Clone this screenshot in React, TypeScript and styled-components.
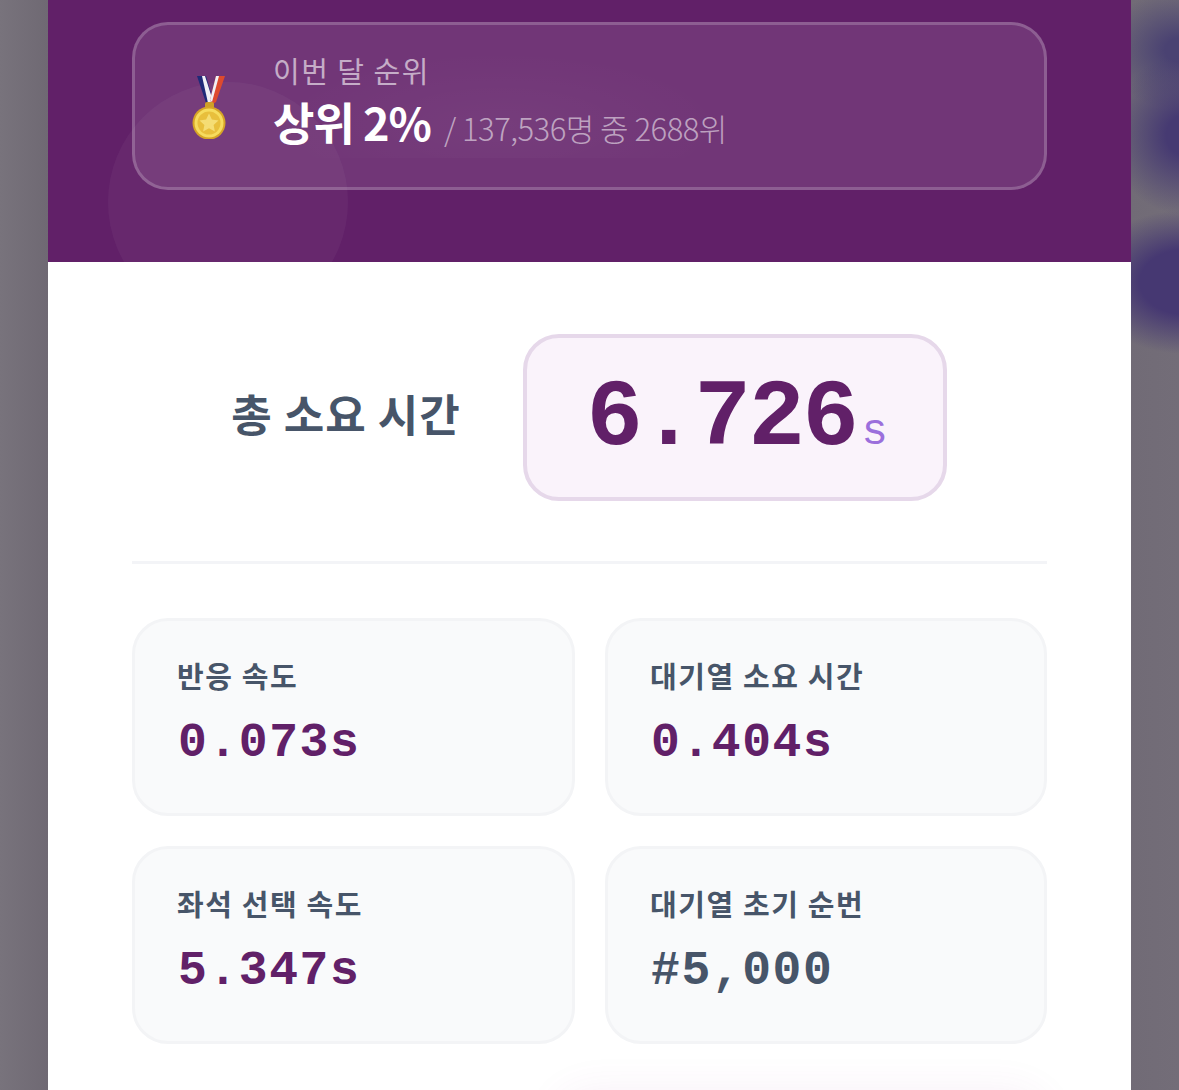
import styled, { createGlobalStyle } from "styled-components";

const GlobalStyle = createGlobalStyle`
  html, body {
    margin: 0;
    padding: 0;
    height: 100%;
    overflow: hidden;
  }
  body {
    font-family: "Noto Sans CJK KR", "Noto Sans", sans-serif;
  }
`;

const Backdrop = styled.div`
  height: 1090px;
  padding: 0 48px;
  overflow: hidden;
  background:
    radial-gradient(ellipse 100px 72px at 1185px 282px, #463872 45%, rgba(70, 56, 114, 0) 100%),
    radial-gradient(ellipse 75px 80px at 1185px 135px, #463a72 25%, rgba(70, 58, 114, 0) 100%),
    radial-gradient(ellipse 75px 60px at 1180px 50px, #4a4272 20%, rgba(74, 66, 114, 0) 100%),
    linear-gradient(90deg, #78737c 0, #6f6973 48px, #716b76 1131px, #736d78 100%);
`;

const Modal = styled.main`
  height: 100%;
  background: #ffffff;
`;

const Header = styled.header`
  position: relative;
  height: 262px;
  padding: 22px 84px 0;
  box-sizing: border-box;
  overflow: hidden;
  background: #612068;
`;

const Bubble = styled.div`
  position: absolute;
  left: 60px;
  top: 82px;
  width: 240px;
  height: 240px;
  border-radius: 50%;
  background: rgba(255, 255, 255, 0.04);
`;

const RankCard = styled.section`
  position: relative;
  display: flex;
  align-items: center;
  gap: 46px;
  height: 168px;
  padding: 0 0 0 56px;
  box-sizing: border-box;
  border: 3px solid rgba(255, 255, 255, 0.2);
  border-radius: 36px;
  background: rgba(255, 255, 255, 0.1);
`;

const Medal = styled.svg`
  flex: none;
  width: 36px;
  height: 66px;
`;

const RankText = styled.div`
  display: flex;
  flex-direction: column;
  margin-top: -4px;
  background: radial-gradient(ellipse at 50% 70%, rgba(255, 255, 255, 0.035), rgba(255, 255, 255, 0) 70%);
`;

const RankLabel = styled.div`
  font-size: 29px;
  line-height: 40px;
  letter-spacing: 1.5px;
  color: rgba(255, 255, 255, 0.6);
`;

const RankLine = styled.div`
  display: flex;
  align-items: baseline;
  gap: 13px;
  margin-top: 2px;
  line-height: 60px;
`;

const RankValue = styled.span`
  font-size: 45px;
  font-weight: 700;
  letter-spacing: -1px;
  color: #ffffff;
`;

const RankDetail = styled.span`
  font-size: 31px;
  font-weight: 300;
  letter-spacing: -0.5px;
  color: rgba(255, 255, 255, 0.55);
`;

const Content = styled.div`
  padding: 72px 84px 0;
`;

const TotalRow = styled.section`
  display: flex;
  align-items: center;
  justify-content: center;
  gap: 62px;
  padding-right: 1px;
`;

const TotalLabel = styled.div`
  padding-bottom: 10px;
  font-size: 44px;
  font-weight: 700;
  letter-spacing: 1px;
  color: #475569;
`;

const TotalBox = styled.div`
  display: flex;
  align-items: baseline;
  justify-content: center;
  width: 424px;
  height: 167px;
  box-sizing: border-box;
  padding: 26px 0 0 5px;
  border: 4px solid #e6d8ea;
  border-radius: 36px;
  background: #faf3fb;
`;

const TotalValue = styled.span`
  font-family: "Liberation Mono", monospace;
  font-size: 94px;
  line-height: 110px;
  font-weight: 700;
  letter-spacing: -2.4px;
  color: #612068;
`;

const TotalUnit = styled.span`
  margin-left: 5px;
  font-family: "Liberation Mono", monospace;
  font-size: 44px;
  color: #9b6fdc;
`;

const Divider = styled.hr`
  height: 3px;
  margin: 60px 0 54px;
  border: 0;
  background: #f3f4f7;
`;

const StatGrid = styled.section`
  display: grid;
  grid-template-columns: 443px 442px;
  grid-auto-rows: 198px;
  gap: 30px;
`;

const StatCard = styled.div`
  display: flex;
  flex-direction: column;
  gap: 20px;
  padding: 34px 42px 0;
  box-sizing: border-box;
  border: 3px solid #f3f4f6;
  border-radius: 36px;
  background: #f9fafb;
`;

const StatLabel = styled.div`
  font-size: 29px;
  line-height: 40px;
  font-weight: 700;
  letter-spacing: 1.6px;
  color: #475569;
`;

const StatValue = styled.div<{ $muted?: boolean }>`
  padding-left: 1px;
  font-family: "Liberation Mono", monospace;
  font-size: 48px;
  line-height: 56px;
  font-weight: 700;
  letter-spacing: 1.6px;
  color: ${(p) => (p.$muted ? "#475569" : "#612068")};
`;

const Actions = styled.div`
  display: grid;
  grid-template-columns: 443px 442px;
  gap: 30px;
  margin-top: 48px;
`;

const ShareGlow = styled.div`
  grid-column: 2;
  height: 100px;
  margin-left: -50px;
  border-radius: 36px;
  box-shadow: 0 -2px 40px rgba(150, 60, 150, 0.07);
`;

const stats = [
  { label: "반응 속도", value: "0.073s" },
  { label: "대기열 소요 시간", value: "0.404s" },
  { label: "좌석 선택 속도", value: "5.347s" },
  { label: "대기열 초기 순번", value: "#5,000", muted: true },
];

function MedalIcon() {
  return (
    <Medal viewBox="0 0 36 66" aria-hidden="true">
      <path d="M6 3h9l7 24-2 5-5-2z" fill="#1f2a78" />
      <path d="M11 3h3l7 22-2 6-2-1z" fill="#f1f1f5" />
      <path d="M34 3h-9l-6 24 3 4 3-2z" fill="#dd4a2e" />
      <path d="M25 3h3l-7 26-2-2z" fill="#f1f1f5" />
      <rect x="14" y="29" width="9" height="7" rx="2" fill="#cf9f28" />
      <circle cx="18" cy="50" r="16.5" fill="#d6a526" />
      <circle cx="18" cy="50" r="14.5" fill="#f6dc5e" />
      <circle cx="18" cy="50" r="11.5" fill="#e8bf3c" />
      <path
        d="M18 40.5l2.9 6.1 6.6.8-4.9 4.5 1.3 6.6-5.9-3.3-5.9 3.3 1.3-6.6-4.9-4.5 6.6-.8z"
        fill="#f5dd74"
      />
    </Medal>
  );
}

export default function App() {
  return (
    <>
      <GlobalStyle />
      <Backdrop>
        <Modal>
          <Header>
            <Bubble />
            <RankCard>
              <MedalIcon />
              <RankText>
                <RankLabel>이번 달 순위</RankLabel>
                <RankLine>
                  <RankValue>상위 2%</RankValue>
                  <RankDetail>/ 137,536명 중 2688위</RankDetail>
                </RankLine>
              </RankText>
            </RankCard>
          </Header>
          <Content>
            <TotalRow>
              <TotalLabel>총 소요 시간</TotalLabel>
              <TotalBox>
                <TotalValue>6.726</TotalValue>
                <TotalUnit>s</TotalUnit>
              </TotalBox>
            </TotalRow>
            <Divider />
            <StatGrid>
              {stats.map((s) => (
                <StatCard key={s.label}>
                  <StatLabel>{s.label}</StatLabel>
                  <StatValue $muted={s.muted}>{s.value}</StatValue>
                </StatCard>
              ))}
            </StatGrid>
            <Actions>
              <ShareGlow />
            </Actions>
          </Content>
        </Modal>
      </Backdrop>
    </>
  );
}
